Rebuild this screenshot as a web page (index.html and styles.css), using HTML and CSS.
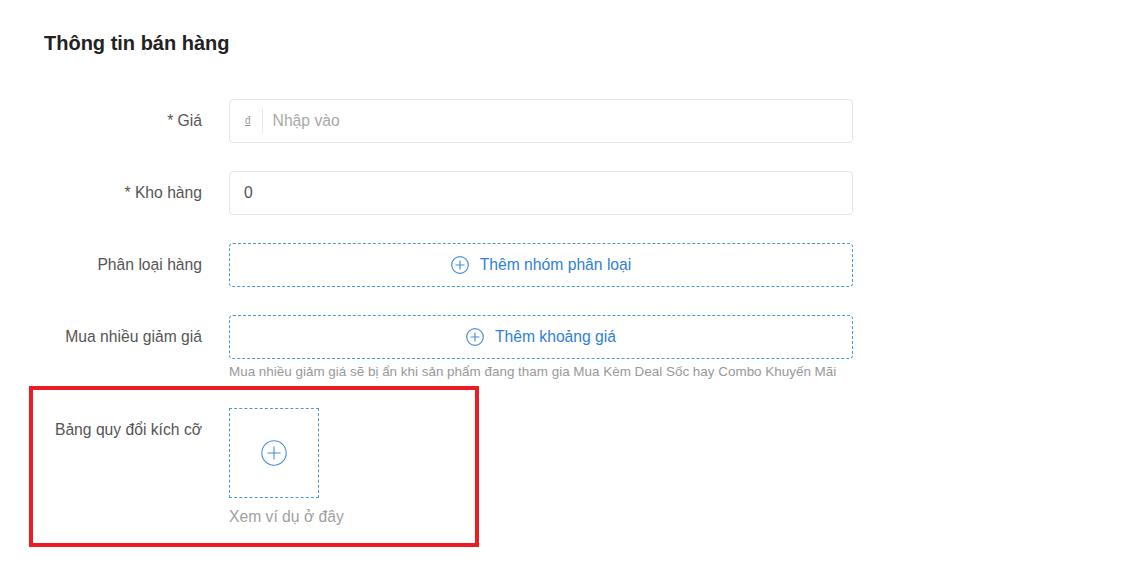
FILE: index.html
```html
<!DOCTYPE html>
<html lang="vi">

<head>
    <meta charset="UTF-8">
    <meta name="viewport" content="width=device-width, initial-scale=1.0">
    <title>Thông tin bán hàng</title>
    <link rel="stylesheet" href="styles.css">
</head>

<body>
    <div class="section">
        <h2 class="section-title">Thông tin bán hàng</h2>

        <div class="form-row">
            <label class="form-label">* Giá</label>
            <div class="form-control input-box">
                <span class="currency">đ</span>
                <input type="text" class="price-input" placeholder="Nhập vào">
            </div>
        </div>

        <div class="form-row">
            <label class="form-label">* Kho hàng</label>
            <div class="form-control input-box">
                <input type="text" value="0">
            </div>
        </div>

        <div class="form-row">
            <label class="form-label">Phân loại hàng</label>
            <div class="form-control">
                <button class="dashed-button" type="button">
                    <svg class="plus-icon" width="18" height="18" viewBox="0 0 18 18">
                        <circle cx="9" cy="9" r="8.3" fill="none" stroke="currentColor" stroke-width="1.2"/>
                        <path d="M9 4.5v9M4.5 9h9" stroke="currentColor" stroke-width="1.2"/>
                    </svg>
                    Thêm nhóm phân loại
                </button>
            </div>
        </div>

        <div class="form-row row-tight">
            <label class="form-label">Mua nhiều giảm giá</label>
            <div class="form-control">
                <button class="dashed-button" type="button">
                    <svg class="plus-icon" width="18" height="18" viewBox="0 0 18 18">
                        <circle cx="9" cy="9" r="8.3" fill="none" stroke="currentColor" stroke-width="1.2"/>
                        <path d="M9 4.5v9M4.5 9h9" stroke="currentColor" stroke-width="1.2"/>
                    </svg>
                    Thêm khoảng giá
                </button>
                <div class="hint">Mua nhiều giảm giá sẽ bị ẩn khi sản phẩm đang tham gia Mua Kèm Deal Sốc hay Combo Khuyến Mãi</div>
            </div>
        </div>

        <!-- fila resaltada en rojo -->
        <div class="form-row highlight">
            <label class="form-label">Bảng quy đổi kích cỡ</label>
            <div class="form-control">
                <div class="upload-box">
                    <svg width="26" height="26" viewBox="0 0 26 26">
                        <circle cx="13" cy="13" r="12.2" fill="none" stroke="#4a8fcf" stroke-width="1.1"/>
                        <path d="M13 6.5v13M6.5 13h13" stroke="#4a8fcf" stroke-width="1.1"/>
                    </svg>
                </div>
                <div class="example-link">Xem ví dụ ở đây</div>
            </div>
        </div>
    </div>
</body>

</html>
```

FILE: styles.css
```css
body {
    font-family: "Liberation Sans", Arial, sans-serif;
    font-size: 15.68px;
    margin: 0;
    padding: 0;
    background-color: white;
    color: #555;
}

.section {
    padding: 31px 0 0 29px;
}

.section-title {
    font-size: 20px;
    line-height: 24px;
    font-weight: bold;
    color: #222;
    margin: 0 0 44px 15px;
}

.form-row {
    display: flex;
    align-items: flex-start;
    margin-bottom: 28px;
}

.row-tight {
    margin-bottom: 5px;
}

.form-label {
    flex: 0 0 200px;
    box-sizing: border-box;
    padding-right: 27px;
    text-align: right;
    line-height: 44px;
    white-space: nowrap;
    color: #555;
}

.form-control {
    width: 624px;
}

.input-box {
    height: 44px;
    box-sizing: border-box;
    border: 1px solid #e5e5e5;
    border-radius: 4px;
    display: flex;
    align-items: center;
    padding: 0 14px;
}

.input-box input {
    flex: 1;
    border: none;
    outline: none;
    font-family: inherit;
    font-size: 15.68px;
    color: #555;
    padding: 0;
    background: transparent;
}

.input-box input::placeholder {
    color: #a8a8a8;
}

.currency {
    font-size: 10px;
    color: #999;
    text-decoration: underline;
    padding: 0 11px 0 1px;
    border-right: 1px solid #e8e8e8;
    line-height: 26px;
    margin-right: 10px;
}

.dashed-button {
    width: 100%;
    height: 44px;
    box-sizing: border-box;
    border: 1px dashed #4a9acb;
    border-radius: 4px;
    background: white;
    color: #2f7fd4;
    font-family: inherit;
    font-size: 15.68px;
    display: flex;
    align-items: center;
    justify-content: center;
    gap: 11px;
    cursor: pointer;
    padding: 0;
}

.plus-icon {
    color: #4a8fcf;
}

.hint {
    font-size: 13.44px;
    line-height: 18px;
    color: #999;
    margin-top: 4px;
    white-space: nowrap;
}

.highlight {
    width: 450px;
    box-sizing: border-box;
    outline: 4px solid #ed1c24;
    outline-offset: -4px;
    padding: 22px 0 20px;
    margin-bottom: 0;
}

.highlight .form-control {
    width: auto;
}

.upload-box {
    width: 90px;
    height: 90px;
    box-sizing: border-box;
    border: 1px dashed #4a9acb;
    display: flex;
    align-items: center;
    justify-content: center;
}

.example-link {
    margin-top: 9px;
    line-height: 20px;
    color: #a0a0a0;
}
```
